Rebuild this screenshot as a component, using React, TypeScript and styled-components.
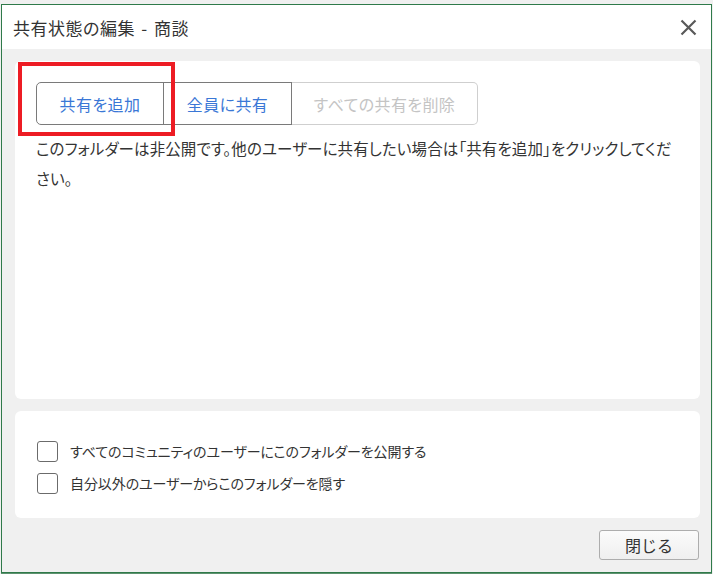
import React from "react";
import styled, { createGlobalStyle } from "styled-components";

const GlobalStyle = createGlobalStyle`
  html, body {
    margin: 0;
    padding: 0;
    background: #f0f0f0;
  }
  body {
    font-family: "Noto Sans CJK JP", "Noto Sans", sans-serif;
    color: #333;
  }
`;

const Page = styled.div`
  padding: 4px 0 0 1px;
  width: 713px;
  height: 574px;
  box-sizing: border-box;
`;

const Window = styled.div`
  width: 711px;
  height: 569px;
  box-sizing: border-box;
  border: 1px solid #2f7a4a;
  box-shadow: 0 1px 0 #5e9270;
  display: flex;
  flex-direction: column;
  background: #f0f0f0;
`;

const Header = styled.div`
  height: 44px;
  flex: none;
  background: #fff;
  display: flex;
  align-items: center;
  justify-content: space-between;
  padding: 0 13px 0 11px;
`;

const Title = styled.h1`
  margin: 0;
  font-size: 17px;
  font-weight: 400;
  color: #333;
  font-feature-settings: "palt";
  letter-spacing: 0.5px;
  word-spacing: 2px;
`;

const CloseIcon = styled.button`
  width: 20px;
  height: 20px;
  padding: 0;
  border: none;
  background: none;
  display: flex;
  align-items: center;
  justify-content: center;
`;

const Body = styled.div`
  flex: 1;
  display: flex;
  flex-direction: column;
  padding: 12px 11px 12px 13px;
  gap: 12px;
`;

const Card = styled.div<{ $height: number; $pad: string }>`
  position: relative;
  height: ${(p) => p.$height}px;
  box-sizing: border-box;
  background: #fff;
  border-radius: 6px;
  padding: ${(p) => p.$pad};
  flex: none;
`;

const ButtonGroup = styled.div`
  display: flex;
`;

const GroupButton = styled.button<{ $width: number; $disabled?: boolean; $pos: "first" | "mid" | "last" }>`
  width: ${(p) => p.$width}px;
  height: 43px;
  box-sizing: border-box;
  background: #fff;
  border: 1px solid ${(p) => (p.$disabled ? "#cfcfcf" : "#7a7a7a")};
  margin-left: ${(p) => (p.$pos === "first" ? 0 : -1)}px;
  border-radius: ${(p) =>
    p.$pos === "first" ? "5px 0 0 5px" : p.$pos === "last" ? "0 5px 5px 0" : "0"};
  border-left-color: ${(p) => (p.$pos === "last" ? "#9a9a9a" : undefined)};
  font-family: "Noto Sans CJK JP", sans-serif;
  font-size: 16px;
  font-feature-settings: "palt";
  letter-spacing: 0.4px;
  color: ${(p) => (p.$disabled ? "#c4c4c4" : "#3a77d6")};
  padding: 0;
  position: relative;
  z-index: ${(p) => (p.$disabled ? 0 : 1)};
`;

const Message = styled.p`
  margin: 8px 0 0;
  font-size: 15.5px;
  line-height: 30px;
  color: #333;
  font-feature-settings: "palt";
  letter-spacing: 0.1px;
  white-space: nowrap;
`;

const Highlight = styled.div`
  position: absolute;
  left: 3px;
  top: 1px;
  width: 157px;
  height: 74px;
  box-sizing: border-box;
  border: 4px solid #ed1c24;
  pointer-events: none;
  z-index: 2;
`;

const CheckList = styled.div`
  display: flex;
  flex-direction: column;
  gap: 11px;
`;

const CheckRow = styled.label`
  display: flex;
  align-items: center;
  gap: 12px;
  font-size: 14px;
  color: #333;
  font-feature-settings: "palt";
  letter-spacing: -0.1px;
  line-height: 21px;
`;

const Box = styled.span`
  width: 21px;
  height: 21px;
  box-sizing: border-box;
  border: 1px solid #6b6b6b;
  border-radius: 3px;
  background: #fff;
  flex: none;
`;

const Footer = styled.div`
  display: flex;
  justify-content: flex-end;
  padding-right: 1px;
`;

const CloseButton = styled.button`
  width: 100px;
  height: 30px;
  box-sizing: border-box;
  border: 1px solid #adadad;
  border-radius: 3px;
  background: linear-gradient(#fbfbfb, #efefef);
  font-family: "Noto Sans CJK JP", sans-serif;
  font-size: 16px;
  color: #333;
  padding: 0;
`;

export default function App() {
  return (
    <>
      <GlobalStyle />
      <Page>
        <Window>
          <Header>
            <Title>共有状態の編集 - 商談</Title>
            <CloseIcon aria-label="閉じる">
              <svg width="17" height="17" viewBox="0 0 17 17">
                <path d="M1.5 1.5 L15.5 15.5 M15.5 1.5 L1.5 15.5" stroke="#595959" strokeWidth="2.2" />
              </svg>
            </CloseIcon>
          </Header>
          <Body>
            <Card $height={338} $pad="21px 20px 0 21px">
              <Highlight />
              <ButtonGroup>
                <GroupButton $width={128} $pos="first">共有を追加</GroupButton>
                <GroupButton $width={129} $pos="mid">全員に共有</GroupButton>
                <GroupButton $width={187} $pos="last" $disabled>すべての共有を削除</GroupButton>
              </ButtonGroup>
              <Message>
                このフォルダーは非公開です。他のユーザーに共有したい場合は「共有を追加」をクリックしてくだ
                <br />
                さい。
              </Message>
            </Card>
            <Card $height={107} $pad="30px 20px 0 22px">
              <CheckList>
                <CheckRow>
                  <Box />
                  すべてのコミュニティのユーザーにこのフォルダーを公開する
                </CheckRow>
                <CheckRow>
                  <Box />
                  自分以外のユーザーからこのフォルダーを隠す
                </CheckRow>
              </CheckList>
            </Card>
            <Footer>
              <CloseButton>閉じる</CloseButton>
            </Footer>
          </Body>
        </Window>
      </Page>
    </>
  );
}
